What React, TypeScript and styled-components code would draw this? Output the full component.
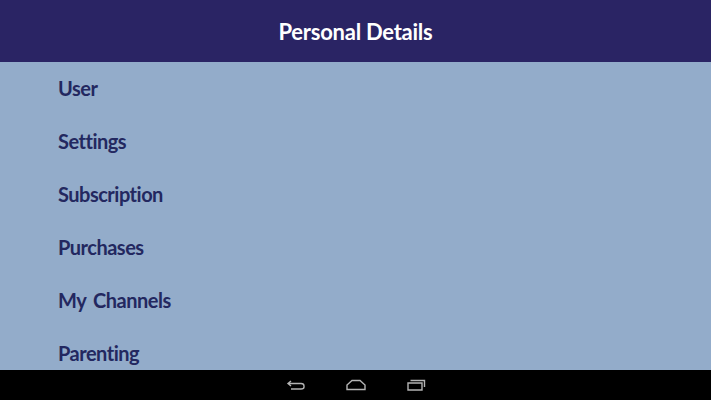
import React from 'react';
import styled, { createGlobalStyle } from 'styled-components';

const GlobalStyle = createGlobalStyle`
  html, body {
    margin: 0;
    padding: 0;
    overflow: hidden;
  }
`

const Screen = styled.div`
  display: flex;
  flex-direction: column;
  width: 711px;
  height: 400px;
  background-color: #93acca;
  font-family: Lato, "Liberation Sans", sans-serif;
`

const Header = styled.header`
  display: flex;
  justify-content: center;
  align-items: center;
  flex: 0 0 62px;
  background-color: #2a2464;
  color: #fff;
  font-size: 22px;
  font-weight: 700;
  letter-spacing: -0.25px;
`

const Menu = styled.ul`
  flex: 1;
  margin: 0;
  padding: 0 0 0 58px;
  list-style: none;
  overflow: hidden;
`

const MenuItem = styled.li`
  display: flex;
  align-items: center;
  box-sizing: border-box;
  height: 53px;
  padding-bottom: 2px;
  color: #232860;
  font-size: 20px;
  font-weight: 700;
  letter-spacing: -0.5px;
  word-spacing: 3px;
`

const NavBar = styled.nav`
  display: flex;
  justify-content: center;
  align-items: center;
  gap: 40px;
  flex: 0 0 30px;
  background-color: #000;
`

const NavIcon = styled.svg`
  width: 20px;
  height: 14px;
  fill: none;
  stroke: #b4b4b4;
  stroke-width: 1.4;
`

const items = ['User', 'Settings', 'Subscription', 'Purchases', 'My Channels', 'Parenting'];

export default function App() {
  return (
    <Screen>
      <GlobalStyle />
      <Header>Personal Details</Header>
      <Menu>
        {items.map(item => <MenuItem key={item}>{item}</MenuItem>)}
      </Menu>
      <NavBar>
        <NavIcon viewBox="0 0 20 14">
          <path d="M5 3 L2 5.5 L5 8 M2 5.5 H15 Q18 5.5 18 8 V9 Q18 11 15 11 H5" />
        </NavIcon>
        <NavIcon viewBox="0 0 20 14">
          <path d="M1 11.5 V7 L6 2.5 H14 L19 7 V11.5 Z" />
        </NavIcon>
        <NavIcon viewBox="0 0 20 14">
          <path d="M2 5 H16 V12 H2 Z M4.5 2.5 H18.5 V9" />
        </NavIcon>
      </NavBar>
    </Screen>
  )
}
